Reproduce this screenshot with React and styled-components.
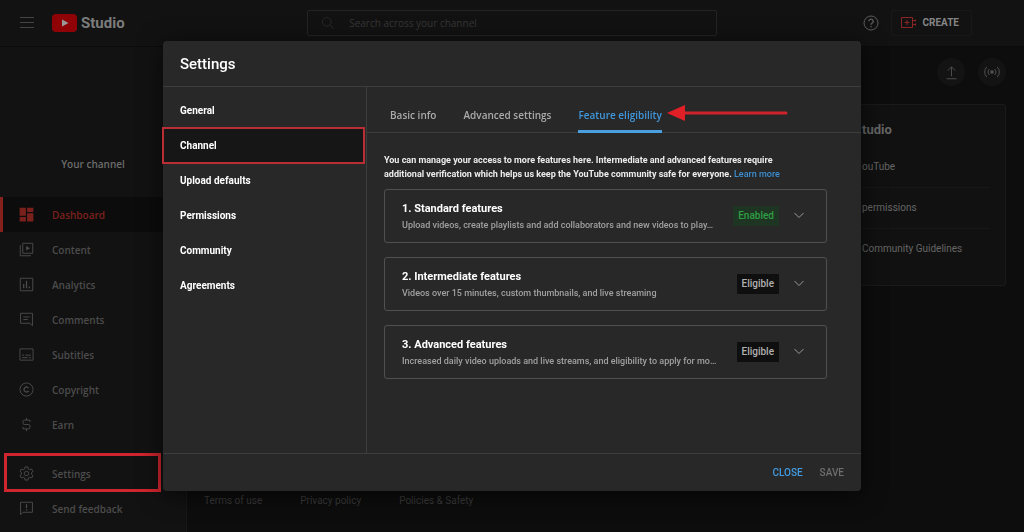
import React from 'react';
import styled, { createGlobalStyle } from 'styled-components';

const GlobalStyle = createGlobalStyle`
    * {
        box-sizing: border-box;
    }

    body {
        margin: 0;
        background: #0d0d0d;
        color: #fff;
        font-family: Roboto, 'Liberation Sans', sans-serif;
        font-size: 10px;
    }

    h1, h2, h3, p, ul {
        margin: 0;
        padding: 0;
    }

    ul {
        list-style: none;
    }

    a {
        color: inherit;
        text-decoration: none;
    }

    button, input {
        font: inherit;
        color: inherit;
        background: none;
        border: 0;
        padding: 0;
    }
`;

const Icon = ({ size = 15, children }) => (
    <svg
        width={size}
        height={size}
        viewBox="0 0 24 24"
        fill="none"
        stroke="currentColor"
        strokeWidth="1.5"
        aria-hidden="true"
    >
        {children}
    </svg>
);

const icons = {
    dashboard: (
        <g fill="currentColor" stroke="none">
            <path d="M1 1h10v13H1zM13 1h10v7H13zM1 16h10v7H1zM13 10h10v13H13z" />
        </g>
    ),
    content: (
        <>
            <path d="M6 2h16v16H6zM2 5v17h17" />
            <path d="M11.5 6.5v7l6-3.5z" fill="currentColor" stroke="none" />
        </>
    ),
    analytics: (
        <>
            <path d="M2 2h20v20H2z" />
            <path d="M7.5 11v7M12 6v12M16.5 15v3" strokeWidth="2" />
        </>
    ),
    comments: (
        <>
            <path d="M2.5 2h19v20l-4-4h-15z" />
            <path d="M7 8h10M7 12h7" />
        </>
    ),
    subtitles: (
        <>
            <path d="M1.5 3h21v18h-21z" />
            <path d="M5 13h3M10 13h9M5 17h9M16 17h3" />
        </>
    ),
    copyright: (
        <>
            <circle cx="12" cy="12" r="10.5" />
            <path d="M15.3 9.8a4 4 0 1 0 0 4.4" strokeWidth="2" />
        </>
    ),
    earn: (
        <path d="M17.5 8V5h-9a2 2 0 0 0-2 2v3a2 2 0 0 0 2 2h7a2 2 0 0 1 2 2v3a2 2 0 0 1-2 2h-9v-3M12 1.5V5M12 19v3.5" />
    ),
    settings: (
        <>
            <path d="M9.7 1.5h4.6l.6 3.3 2 1.2 3.2-1.2 2.3 4-2.6 2.1v2.2l2.6 2.1-2.3 4-3.2-1.2-2 1.2-.6 3.3H9.7l-.6-3.3-2-1.2-3.2 1.2-2.3-4 2.6-2.1v-2.2L1.6 8.8l2.3-4L7.1 6l2-1.2z" />
            <circle cx="12" cy="12" r="3.5" />
        </>
    ),
    feedback: (
        <>
            <path d="M2.5 2h19v16h-15l-4 4z" />
            <path d="M12 5v6M12 13v2" strokeWidth="2" />
        </>
    ),
};

const menu = [
    { label: 'Dashboard', icon: 'dashboard', active: true },
    { label: 'Content', icon: 'content' },
    { label: 'Analytics', icon: 'analytics' },
    { label: 'Comments', icon: 'comments' },
    { label: 'Subtitles', icon: 'subtitles' },
    { label: 'Copyright', icon: 'copyright' },
    { label: 'Earn', icon: 'earn' },
];

const bottomMenu = [
    { label: 'Settings', icon: 'settings', marked: true },
    { label: 'Send feedback', icon: 'feedback' },
];

const sections = [
    'General',
    'Channel',
    'Upload defaults',
    'Permissions',
    'Community',
    'Agreements',
];

const tabs = ['Basic info', 'Advanced settings', 'Feature eligibility'];

const features = [
    {
        title: '1. Standard features',
        text: 'Upload videos, create playlists and add collaborators and new videos to play…',
        status: 'Enabled',
    },
    {
        title: '2. Intermediate features',
        text: 'Videos over 15 minutes, custom thumbnails, and live streaming',
        status: 'Eligible',
    },
    {
        title: '3. Advanced features',
        text: 'Increased daily video uploads and live streams, and eligibility to apply for mo…',
        status: 'Eligible',
    },
];

const MenuList = ({ items }) => (
    <ul>
        {items.map(e => (
            <li key={e.label}>
                <MenuLink href="#" $active={e.active} $marked={e.marked}>
                    <Icon>{icons[e.icon]}</Icon>
                    {e.label}
                </MenuLink>
            </li>
        ))}
    </ul>
);

const TopBar = () => (
    <Header>
        <Brand>
            <IconButton aria-label="Menu">
                <svg width="14" height="11" viewBox="0 0 14 11" stroke="currentColor">
                    <path d="M0 .5h14M0 5.5h14M0 10.5h14" />
                </svg>
            </IconButton>
            <Logo href="#">
                <svg width="25" height="18" viewBox="0 0 25 18" aria-hidden="true">
                    <rect width="25" height="18" rx="4" fill="#8f0306" />
                    <path d="M10 5.5v7l6.5-3.5z" fill="#9a9a9a" />
                </svg>
                <span>Studio</span>
            </Logo>
        </Brand>
        <Search>
            <Icon size={14}>
                <circle cx="10" cy="10" r="7.5" />
                <path d="M15.5 15.5l6.5 6.5" />
            </Icon>
            <input
                type="search"
                aria-label="Search"
                placeholder="Search across your channel"
            />
        </Search>
        <Actions>
            <IconButton aria-label="Help">
                <Icon size={16}>
                    <circle cx="12" cy="12" r="10.5" />
                    <path d="M8.8 9.5a3.2 3.2 0 1 1 5 2.6c-1.2.8-1.8 1.3-1.8 2.7M12 16.5v2" strokeWidth="2" />
                </Icon>
            </IconButton>
            <CreateButton>
                <svg width="16" height="12" viewBox="0 0 16 12" fill="none" stroke="#8c2525" aria-hidden="true">
                    <path d="M.5.5h11v10H.5zM6 3v5M3.5 5.5h5M12 3.5h3M12 7.5h3M14.5 2.5v2M14.5 6.5v2" />
                </svg>
                CREATE
            </CreateButton>
        </Actions>
    </Header>
);

const SettingsDialog = () => (
    <Overlay>
        <Dialog role="dialog" aria-modal="true" aria-labelledby="settings-title">
            <DialogHeader>
                <h2 id="settings-title">Settings</h2>
            </DialogHeader>
            <DialogBody>
                <SectionNav>
                    {sections.map(e => (
                        <SectionButton key={e} $selected={e === 'Channel'}>
                            {e}
                        </SectionButton>
                    ))}
                </SectionNav>
                <Panel>
                    <Tabs role="tablist">
                        {tabs.map((e, i) => (
                            <Tab key={e} role="tab" aria-selected={i === 2} $selected={i === 2}>
                                {e}
                            </Tab>
                        ))}
                        <Arrow width="121" height="16" viewBox="0 0 121 16" aria-hidden="true">
                            <path d="M17 8h102" stroke="#cf242c" strokeWidth="3" strokeLinecap="round" />
                            <path d="M0 8L18 0v16z" fill="#e11f27" />
                        </Arrow>
                    </Tabs>
                    <PanelContent>
                        <Intro>
                            You can manage your access to more features here. Intermediate and advanced features require
                            <br />
                            additional verification which helps us keep the YouTube community safe for everyone.{' '}
                            <a href="#">Learn more</a>
                        </Intro>
                        {features.map(e => (
                            <FeatureCard key={e.title}>
                                <FeatureText>
                                    <h3>{e.title}</h3>
                                    <p>{e.text}</p>
                                </FeatureText>
                                <Badge $enabled={e.status === 'Enabled'}>{e.status}</Badge>
                                <IconButton aria-label={`Expand ${e.title}`}>
                                    <svg width="12" height="8" viewBox="0 0 12 8" fill="none" stroke="#999">
                                        <path d="M1.5 1L6 5.5 10.5 1" />
                                    </svg>
                                </IconButton>
                            </FeatureCard>
                        ))}
                    </PanelContent>
                </Panel>
            </DialogBody>
            <DialogFooter>
                <TextButton $primary>CLOSE</TextButton>
                <TextButton disabled>SAVE</TextButton>
            </DialogFooter>
        </Dialog>
    </Overlay>
);

const App = () => (
    <>
        <GlobalStyle />
        <Page>
            <TopBar />
            <Columns>
                <Sidebar>
                    <ChannelName>Your channel</ChannelName>
                    <MenuList items={menu} />
                    <BottomMenu>
                        <MenuList items={bottomMenu} />
                    </BottomMenu>
                </Sidebar>
                <Main>
                    <QuickActions>
                        <RoundButton aria-label="Upload videos">
                            <Icon>
                                <path d="M12 18V3M6 9l6-6 6 6M4 22h16" />
                            </Icon>
                        </RoundButton>
                        <RoundButton aria-label="Go live">
                            <Icon size={16}>
                                <circle cx="12" cy="12" r="2" fill="currentColor" />
                                <path d="M8 7.5a6.5 6.5 0 0 0 0 9M16 7.5a6.5 6.5 0 0 1 0 9M4 4.5a11 11 0 0 0 0 15M20 4.5a11 11 0 0 1 0 15" />
                            </Icon>
                        </RoundButton>
                    </QuickActions>
                    <NewsCard>
                        <h2>tudio</h2>
                        <ul>
                            <li>ouTube</li>
                            <li>permissions</li>
                            <li>Community Guidelines</li>
                        </ul>
                    </NewsCard>
                    <LegalLinks>
                        <a href="#">Terms of use</a>
                        <a href="#">Privacy policy</a>
                        <a href="#">Policies &amp; Safety</a>
                    </LegalLinks>
                </Main>
            </Columns>
        </Page>
        <SettingsDialog />
    </>
);

const Page = styled.div`
    display: flex;
    flex-direction: column;
    min-height: 100vh;
`;

const Header = styled.header`
    display: grid;
    grid-template-columns: 1fr 40% 1fr;
    align-items: center;
    height: 47px;
    padding-bottom: 1px;
    background: #121212;
    border-bottom: 1px solid #0b0b0b;
`;

const Brand = styled.div`
    display: flex;
    align-items: center;
    gap: 18px;
    padding-left: 20px;
    color: #444;
`;

const IconButton = styled.button`
    display: flex;
    align-items: center;
    color: inherit;
    cursor: pointer;
`;

const Logo = styled.a`
    display: flex;
    align-items: center;
    gap: 4px;
    color: #7c7c7c;
    font-size: 15px;
    font-weight: 700;
`;

const Search = styled.label`
    display: flex;
    align-items: center;
    gap: 14px;
    height: 26px;
    padding: 0 13px;
    border: 1px solid #242424;
    border-radius: 2px;
    color: #2c2c2c;

    input {
        flex: 1;
        min-width: 0;
        outline: none;
        font-family: 'Open Sans', sans-serif;
    }

    input::placeholder {
        color: #363636;
        opacity: 1;
    }
`;

const Actions = styled.div`
    display: flex;
    align-items: center;
    justify-content: flex-end;
    gap: 12px;
    padding-right: 52px;
    color: #5c5c5c;
`;

const CreateButton = styled.button`
    display: flex;
    align-items: center;
    gap: 5px;
    height: 26px;
    padding: 0 12px 0 9px;
    border: 1px solid #191919;
    border-radius: 2px;
    color: #858585;
    font-weight: 700;
`;

const Columns = styled.div`
    display: flex;
    flex: 1;
`;

const Sidebar = styled.nav`
    display: flex;
    flex-direction: column;
    flex: 0 0 187px;
    padding-bottom: 6px;
    background: #121212;
    border-right: 1px solid #181818;
    font-family: 'Open Sans', sans-serif;
    font-weight: 600;
`;

const ChannelName = styled.p`
    padding: 108px 0 24px;
    color: #6c6c6c;
    line-height: 18px;
    text-align: center;
`;

const BottomMenu = styled.div`
    margin-top: auto;
`;

const MenuLink = styled.a`
    position: relative;
    display: flex;
    align-items: center;
    gap: 18px;
    height: 35px;
    padding-left: 19px;
    color: ${({ $active }) => ($active ? '#7b211d' : '#4c4c4c')};
    background: ${({ $active }) => ($active ? '#0c0c0c' : 'none')};
    box-shadow: ${({ $active }) => ($active ? 'inset 3px 0 #85211c' : 'none')};

    &::after {
        content: '';
        display: ${({ $marked }) => ($marked ? 'block' : 'none')};
        position: absolute;
        inset: -3px 25px -1px 4px;
        border: 3px solid #cf252e;
    }
`;

const Main = styled.main`
    display: flex;
    flex-direction: column;
    flex: 1;
    align-items: flex-end;
    padding: 11px 18px 24px 17px;
`;

const QuickActions = styled.div`
    display: flex;
    gap: 13px;
    margin-bottom: 18px;
`;

const RoundButton = styled.button`
    display: grid;
    place-items: center;
    width: 28px;
    height: 28px;
    border-radius: 50%;
    background: #131313;
    color: #505050;
`;

const NewsCard = styled.section`
    width: 271px;
    padding: 16px 15px 16px 126px;
    background: #111;
    border: 1px solid #1a1a1a;
    border-radius: 2px;
    color: #666;

    h2 {
        margin-bottom: 8px;
        font-size: 13px;
        font-weight: 700;
        line-height: 18px;
    }

    li {
        line-height: 40px;
        white-space: nowrap;
    }

    li + li {
        border-top: 1px solid #181818;
    }
`;

const LegalLinks = styled.footer`
    display: flex;
    align-self: flex-start;
    gap: 38px;
    margin-top: auto;
    color: #3a3a3a;
    line-height: 14px;
`;

const Overlay = styled.div`
    position: fixed;
    inset: 0;
    display: flex;
    align-items: center;
    justify-content: center;
    pointer-events: none;
`;

const Dialog = styled.div`
    display: flex;
    flex-direction: column;
    width: 90%;
    max-width: 698px;
    height: calc(100vh - 82px);
    background: #282828;
    border-radius: 4px;
    box-shadow: 0 4px 24px rgba(0, 0, 0, 0.6);
    pointer-events: auto;
`;

const DialogHeader = styled.header`
    padding: 13px 17px 11px;
    border-bottom: 1px solid #3d3d3d;

    h2 {
        font-size: 15px;
        font-weight: 500;
        line-height: 21px;
    }
`;

const DialogBody = styled.div`
    display: flex;
    flex: 1;
    min-height: 0;
`;

const SectionNav = styled.nav`
    display: flex;
    flex-direction: column;
    flex: 0 0 204px;
    padding: 6px 2px 0 0;
    border-right: 1px solid #3d3d3d;
`;

const SectionButton = styled.button`
    height: 35px;
    padding-left: 17px;
    text-align: left;
    font-weight: 700;
    background: ${({ $selected }) => ($selected ? '#161616' : 'none')};
    outline: ${({ $selected }) => ($selected ? '2px solid #b92d35' : 'none')};
    outline-offset: ${({ $selected }) => ($selected ? '-1px' : '0')};
`;

const Panel = styled.div`
    flex: 1;
    min-width: 0;
`;

const Tabs = styled.div`
    position: relative;
    display: flex;
    gap: 27px;
    height: 46px;
    padding-left: 23px;
    border-bottom: 1px solid #3d3d3d;
`;

const Tab = styled.button`
    padding-top: 12px;
    margin-bottom: -1px;
    border-bottom: 3px solid ${({ $selected }) => ($selected ? '#4a9fe0' : 'transparent')};
    color: ${({ $selected }) => ($selected ? '#3f97dc' : '#aaa')};
    font-family: 'Open Sans', sans-serif;
    font-weight: 600;
    white-space: nowrap;
`;

/* points at the selected tab from its right side */
const Arrow = styled.svg`
    position: absolute;
    left: 300px;
    top: 18px;
`;

const PanelContent = styled.div`
    display: flex;
    flex-direction: column;
    gap: 14px;
    padding: 20px 34px 0 17px;
`;

const Intro = styled.p`
    margin-bottom: -6px;
    font-size: 9px;
    font-weight: 700;
    line-height: 14px;
    color: #ececec;

    a {
        color: #3c8fd2;
        font-weight: 500;
    }
`;

const FeatureCard = styled.section`
    display: flex;
    align-items: center;
    height: 54px;
    padding: 0 21px 0 17px;
    border: 1px solid #505050;
    border-radius: 3px;
`;

const FeatureText = styled.div`
    flex: 1;
    min-width: 0;
    padding-top: 2px;
    line-height: 16px;

    h3 {
        font-size: 11px;
        font-weight: 700;
    }

    p {
        color: #a0a0a0;
        font-size: 9px;
        font-weight: 500;
        overflow: hidden;
        text-overflow: ellipsis;
        white-space: nowrap;
    }
`;

const Badge = styled.span`
    margin: 0 14px 0 6px;
    padding: 0 5px;
    line-height: 20px;
    font-weight: 500;
    color: ${({ $enabled }) => ($enabled ? '#2f9e44' : '#b0b0b0')};
    background: ${({ $enabled }) => ($enabled ? '#1e3523' : '#0f0f0f')};
`;

const DialogFooter = styled.footer`
    display: flex;
    align-items: center;
    justify-content: flex-end;
    gap: 17px;
    height: 38px;
    padding-right: 17px;
    border-top: 1px solid #3d3d3d;
`;

const TextButton = styled.button`
    font-weight: 500;
    color: ${({ $primary }) => ($primary ? '#429be0' : '#6e6e6e')};
`;

export default App;
